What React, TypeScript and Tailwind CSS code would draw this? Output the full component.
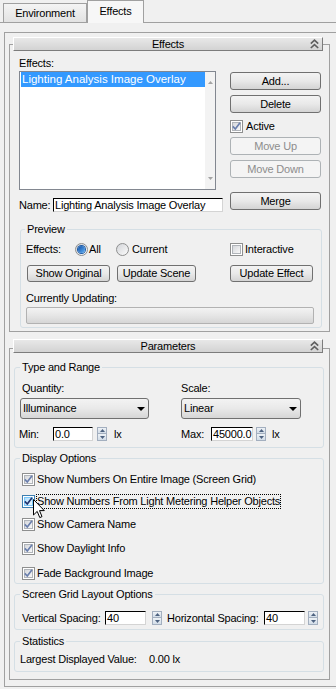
import React from 'react'

type Kids = { children?: React.ReactNode; className?: string }

function Btn({ children, className = '', disabled = false }: Kids & { disabled?: boolean }) {
  return (
    <button
      type="button"
      className={`flex shrink-0 items-center justify-center rounded-[3px] border p-0 leading-none ${
        disabled
          ? 'border-[#adb2b5] bg-[#f4f4f4] text-[#8d8d8d]'
          : 'border-[#707070] bg-gradient-to-b from-[#f3f3f3] via-[#e9e9e9] to-[#d4d4d4] text-black'
      } ${className}`}
    >
      {children}
    </button>
  )
}

function Check({ checked = false, hot = false }: { checked?: boolean; hot?: boolean }) {
  return (
    <span className={`flex h-[13px] w-[13px] shrink-0 items-center justify-center border bg-white ${hot ? 'border-[#3c7fb1]' : 'border-[#8e8f8f]'}`}>
      <span
        className={`relative flex h-[9px] w-[9px] items-center justify-center border ${
          hot ? 'border-[#79c6f9] bg-gradient-to-br from-[#b1dffd] to-[#eaf7fe]' : 'border-[#b0b4b9] bg-gradient-to-br from-[#d6d8dc] to-[#f8f8f8]'
        }`}
      >
        {checked && (
          <svg width="9" height="9" viewBox="0 0 9 9" className="overflow-visible">
            <path d="M0.8 4.3 L3.3 7 L8 0.8" stroke={hot ? '#21346f' : '#6a7fad'} strokeWidth="1.7" fill="none" />
          </svg>
        )}
      </span>
    </span>
  )
}

function Radio({ checked = false }: { checked?: boolean }) {
  return (
    <span className="flex h-[13px] w-[13px] shrink-0 items-center justify-center rounded-full border border-[#8e8f8f] bg-gradient-to-br from-[#d3d5d9] to-[#fbfbfb]">
      {checked && <span className="h-[7px] w-[7px] rounded-full bg-gradient-to-br from-[#0b4fa8] to-[#64b1f3] ring-1 ring-[#1c5aa5]" />}
    </span>
  )
}

function Spinner({ className = '' }: { className?: string }) {
  return (
    <span className={`flex h-[14px] w-[10px] shrink-0 flex-col border border-[#a3afbf] ${className}`}>
      <span className="flex h-1/2 items-center justify-center border-b border-[#a3afbf] bg-gradient-to-b from-[#eef2f6] to-[#d3dde8]">
        <svg width="5" height="3" viewBox="0 0 5 3"><path d="M0 3 L2.5 0 L5 3 Z" fill="#4d6280" /></svg>
      </span>
      <span className="flex h-1/2 items-center justify-center bg-gradient-to-b from-[#eef2f6] to-[#d3dde8]">
        <svg width="5" height="3" viewBox="0 0 5 3"><path d="M0 0 L5 0 L2.5 3 Z" fill="#4d6280" /></svg>
      </span>
    </span>
  )
}

function Field({ value, className = '' }: { value: string; className?: string }) {
  return (
    <span
      className={`block h-[14px] shrink-0 overflow-hidden whitespace-nowrap border border-t-black border-l-black border-r-[#d4d4d4] border-b-[#d4d4d4] bg-white pl-[1px] leading-[12px] ${className}`}
    >
      {value}
    </span>
  )
}

function Combo({ value, className = '' }: { value: string; className?: string }) {
  return (
    <div className={`flex h-[21px] shrink-0 items-center rounded-[3px] border border-[#707070] bg-gradient-to-b from-[#f3f3f3] via-[#e9e9e9] to-[#d6d6d6] pl-[2px] pr-[3px] ${className}`}>
      <span className="flex-1">{value}</span>
      <svg width="8" height="4" viewBox="0 0 8 4"><path d="M0 0 H8 L4 4 Z" fill="#000" /></svg>
    </div>
  )
}

function Group({ title, className = '', legend = 'ml-[5px]', children }: Kids & { title: string; legend?: string }) {
  return (
    <fieldset className={`shrink-0 rounded-[3px] border border-[#d5dfe5] ${className}`}>
      <legend className={`px-[2px] leading-[13px] ${legend}`}>{title}</legend>
      {children}
    </fieldset>
  )
}

function TitleBar({ title }: { title: string }) {
  return (
    <div className="relative z-10 ml-[8px] flex h-[14px] w-[310px] items-center border border-t-white border-l-white border-r-[#7c7c7c] border-b-[#7c7c7c] bg-gradient-to-b from-[#e8e8e8] to-[#d3d3d3] leading-none">
      <span className="w-[16px]" />
      <span className="flex-1 text-center">{title}</span>
      <span className="flex w-[16px] items-center justify-center">
        <svg width="9" height="10" viewBox="0 0 9 10">
          <path d="M0.8 4.6 L4.5 1.2 L8.2 4.6" stroke="#5e5e5e" strokeWidth="1.6" fill="none" />
          <path d="M0.8 9 L4.5 5.6 L8.2 9" stroke="#5e5e5e" strokeWidth="1.6" fill="none" />
        </svg>
      </span>
    </div>
  )
}

export default function App() {
  return (
    <div className="h-[689px] w-[336px] overflow-hidden bg-[#f0f0f0] font-['Liberation_Sans',Arial,sans-serif] text-[11px] leading-[13px] tracking-[-0.2px] text-black">
      {/* tabs */}
      <div className="flex h-[23px] items-end border-b border-[#a0a0a0] pl-[3px]">
        <div className="flex h-[19px] w-[84px] items-center justify-center border border-b-0 border-[#a0a0a0] bg-gradient-to-b from-[#f4f4f4] to-[#e2e2e2]">
          Environment
        </div>
        <div className="relative -mb-px flex h-[23px] w-[57px] items-center justify-center border border-b-0 border-[#a0a0a0] bg-[#f7f7f7] pb-[2px]">
          Effects
        </div>
      </div>

      {/* rollout container */}
      <div className="ml-[4px] mt-[9px] h-[655px] w-[332px] border-l border-t border-b border-[#a0a0a0]">
        {/* Effects rollout */}
        <div className="mt-[4px]">
          <TitleBar title="Effects" />
        </div>
        <div className="-mt-[7px] ml-[4px] flex h-[288px] w-[321px] flex-col border border-[#a0a0a0]">
          <div className="mt-[12px] flex">
            <div className="ml-[9px] w-[197px]">
              <div className="h-[14px] leading-[12px]">Effects:</div>
              <div className="flex h-[119px] w-[197px] border border-[#828790] bg-white">
                <div className="flex-1">
                  <div className="ml-px h-[15px] bg-[#3399ff] pl-[1px] text-[11.5px] leading-[15px] tracking-normal whitespace-nowrap text-white">Lighting Analysis Image Overlay</div>
                </div>
                <div className="flex w-[10px] flex-col items-center justify-between bg-[#f3f3f3] py-[9px]">
                  <svg width="5" height="3" viewBox="0 0 5 3"><path d="M0 3 L2.5 0 L5 3 Z" fill="#a3a3a3" /></svg>
                  <svg width="5" height="3" viewBox="0 0 5 3"><path d="M0 0 L5 0 L2.5 3 Z" fill="#a3a3a3" /></svg>
                </div>
              </div>
            </div>
            <div className="ml-[14px] flex w-[91px] flex-col">
              <Btn className="mt-[15px] h-[18px] w-[91px]">Add...</Btn>
              <Btn className="mt-[5px] h-[18px] w-[91px]">Delete</Btn>
              <div className="mt-[7px] flex h-[13px] items-center">
                <Check checked />
                <span className="ml-[3px]">Active</span>
              </div>
              <Btn disabled className="mt-[4px] h-[18px] w-[91px]">Move Up</Btn>
              <Btn disabled className="mt-[5px] h-[18px] w-[91px]">Move Down</Btn>
            </div>
          </div>

          <div className="mt-[2px] flex">
            <div className="ml-[9px] mt-[6px] flex h-[14px] items-center">
              <span className="w-[34px]">Name:</span>
              <Field value="Lighting Analysis Image Overlay" className="w-[170px]" />
            </div>
            <Btn className="ml-[7px] h-[18px] w-[91px]">Merge</Btn>
          </div>

          <Group title="Preview" legend="ml-[4px]" className="ml-[10px] mt-[11px] h-[105px] w-[302px]">
            <div className="mt-[7px] flex h-[13px] items-center pl-[5px]">
              <span className="w-[49px]">Effects:</span>
              <Radio checked />
              <span className="ml-[1px] w-[27px]">All</span>
              <Radio />
              <span className="ml-[3px] w-[98px]">Current</span>
              <Check />
              <span className="ml-[2px]">Interactive</span>
            </div>
            <div className="mt-[9px] flex">
              <Btn className="ml-[6px] h-[17px] w-[83px]">Show Original</Btn>
              <Btn className="ml-[7px] h-[17px] w-[79px]">Update Scene</Btn>
              <Btn className="ml-[34px] h-[17px] w-[83px]">Update Effect</Btn>
            </div>
            <div className="mt-[10px] h-[13px] pl-[5px]">Currently Updating:</div>
            <div className="ml-[5px] mt-[2px] h-[17px] w-[288px] rounded-[2px] border border-[#b2b2b2] bg-gradient-to-b from-[#f3f3f3] via-[#e6e6e6] to-[#d6d6d6]" />
          </Group>
        </div>

        {/* Parameters rollout */}
        <div className="mt-[7px]">
          <TitleBar title="Parameters" />
        </div>
        <div className="-mt-[5px] ml-[4px] flex h-[332px] w-[321px] flex-col border border-[#a0a0a0]">
          <Group title="Type and Range" className="ml-[4px] mt-[12px] h-[87px] w-[310px]">
            <div className="mt-[8px] flex h-[13px] items-center pl-[7px]">
              <span className="w-[159px]">Quantity:</span>
              <span>Scale:</span>
            </div>
            <div className="mt-[3px] flex">
              <Combo value="Illuminance" className="ml-[5px] w-[129px]" />
              <Combo value="Linear" className="ml-[32px] w-[120px]" />
            </div>
            <div className="mt-[8px] flex h-[14px] items-center">
              <div className="flex w-[166px] items-center pl-[4px]">
                <span className="w-[34px]">Min:</span>
                <Field value="0.0" className="w-[40px]" />
                <Spinner className="ml-[4px]" />
                <span className="ml-[7px]">lx</span>
              </div>
              <span className="w-[30px]">Max:</span>
              <Field value="45000.0" className="w-[42px]" />
              <Spinner className="ml-[3px]" />
              <span className="ml-[6px]">lx</span>
            </div>
          </Group>

          <Group title="Display Options" className="ml-[4px] mt-[4px] h-[132px] w-[310px]">
            <div className="mt-[8px] flex h-[13px] items-center pl-[7px]">
              <Check checked />
              <span className="ml-[2px]">Show Numbers On Entire Image (Screen Grid)</span>
            </div>
            <div className="relative mt-[9px] flex h-[13px] items-center pl-[7px]">
              <Check checked hot />
              <span className="ml-[1px] h-[15px] border border-dotted border-black leading-[13px] whitespace-nowrap">Show Numbers From Light Metering Helper Objects</span>
              <svg className="absolute left-[18px] top-[4px]" width="12" height="20" viewBox="0 0 12 20">
                <path d="M0.5 0.5 L0.5 16 L4.2 12.4 L6.8 18.6 L9 17.6 L6.5 11.6 L11.3 11.6 Z" fill="#fff" stroke="#000" strokeWidth="1" />
              </svg>
            </div>
            <div className="mt-[10px] flex h-[13px] items-center pl-[7px]">
              <Check checked />
              <span className="ml-[2px]">Show Camera Name</span>
            </div>
            <div className="mt-[11px] flex h-[13px] items-center pl-[7px]">
              <Check checked />
              <span className="ml-[2px]">Show Daylight Info</span>
            </div>
            <div className="mt-[12px] flex h-[13px] items-center pl-[7px]">
              <Check checked />
              <span className="ml-[2px]">Fade Background Image</span>
            </div>
          </Group>

          <Group title="Screen Grid Layout Options" className="ml-[4px] mt-[4px] h-[42px] w-[310px]">
            <div className="mt-[10px] flex h-[14px] items-center pl-[7px]">
              <span className="w-[83px]">Vertical Spacing:</span>
              <Field value="40" className="w-[41px]" />
              <Spinner className="ml-[6px]" />
              <span className="ml-[5px] w-[97px]">Horizontal Spacing:</span>
              <Field value="40" className="w-[41px]" />
              <Spinner className="ml-[3px]" />
            </div>
          </Group>

          <Group title="Statistics" className="ml-[4px] mt-[5px] h-[37px] w-[310px]">
            <div className="mt-[5px] flex h-[13px] items-center pl-[5px]">
              <span className="w-[129px]">Largest Displayed Value:</span>
              <span>0.00 lx</span>
            </div>
          </Group>
        </div>
      </div>
    </div>
  )
}
